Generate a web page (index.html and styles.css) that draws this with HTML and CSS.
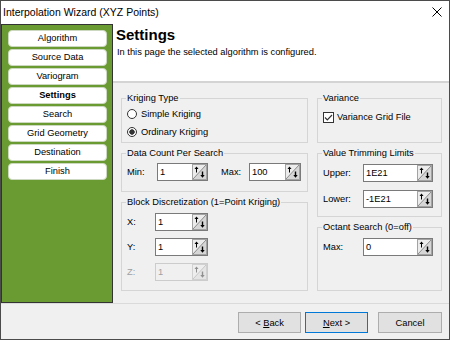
FILE: index.html
```html
<!DOCTYPE html>
<html lang="en">
<head>
    <meta charset="UTF-8">
    <title>Interpolation Wizard (XYZ Points)</title>
    <link rel="stylesheet" href="styles.css">
</head>
<body>
    <div class="window">
        <div class="titlebar">
            <span class="title">Interpolation Wizard (XYZ Points)</span>
            <svg class="close" width="10" height="10" viewBox="0 0 10 10"><path d="M0.5 0.5 L9.5 9.5 M9.5 0.5 L0.5 9.5" stroke="#000" stroke-width="1"/></svg>
        </div>
        <div class="main">
            <nav class="steps">
                <div class="step">Algorithm</div>
                <div class="step">Source Data</div>
                <div class="step">Variogram</div>
                <div class="step current">Settings</div>
                <div class="step">Search</div>
                <div class="step">Grid Geometry</div>
                <div class="step">Destination</div>
                <div class="step">Finish</div>
            </nav>
            <div class="page">
                <div class="page-head">
                    <h1>Settings</h1>
                    <p>In this page the selected algorithm is configured.</p>
                </div>
                <div class="page-body">
                    <div class="column left">
                        <fieldset class="group kriging">
                            <legend>Kriging Type</legend>
                            <label class="option"><span class="radio"></span>Simple Kriging</label>
                            <label class="option"><span class="radio checked"></span>Ordinary Kriging</label>
                        </fieldset>
                        <fieldset class="group data-count">
                            <legend>Data Count Per Search</legend>
                            <div class="field">
                                <label class="lbl-min">Min:</label>
                                <div class="spin w51"><span class="value">1</span><svg width="15" height="16" viewBox="0 0 15 16"><rect x=".5" y=".5" width="14" height="15" fill="#ececec" stroke="#a3a3a3"/><path d="M1 15 L14 1 L14 15 Z" fill="#d6d6d6"/><path d="M1 15 L14 1" stroke="#8c8c8c"/><path d="M4.5 4 V8.5" stroke="#000"/><path d="M2.5 5 L4.5 2.5 L6.5 5 Z" fill="#000"/><path d="M10.5 7.5 V12" stroke="#000" stroke-width="1.4"/><path d="M8.3 11 L10.5 13.8 L12.7 11 Z" fill="#000"/></svg></div>
                                <label class="lbl-max">Max:</label>
                                <div class="spin w52"><span class="value">100</span><svg width="15" height="16" viewBox="0 0 15 16"><rect x=".5" y=".5" width="14" height="15" fill="#ececec" stroke="#a3a3a3"/><path d="M1 15 L14 1 L14 15 Z" fill="#d6d6d6"/><path d="M1 15 L14 1" stroke="#8c8c8c"/><path d="M4.5 4 V8.5" stroke="#000"/><path d="M2.5 5 L4.5 2.5 L6.5 5 Z" fill="#000"/><path d="M10.5 7.5 V12" stroke="#000" stroke-width="1.4"/><path d="M8.3 11 L10.5 13.8 L12.7 11 Z" fill="#000"/></svg></div>
                            </div>
                        </fieldset>
                        <fieldset class="group block fill">
                            <legend>Block Discretization (1=Point Kriging)</legend>
                            <div class="field">
                                <label class="lbl-axis">X:</label>
                                <div class="spin w53"><span class="value">1</span><svg width="15" height="16" viewBox="0 0 15 16"><rect x=".5" y=".5" width="14" height="15" fill="#ececec" stroke="#a3a3a3"/><path d="M1 15 L14 1 L14 15 Z" fill="#d6d6d6"/><path d="M1 15 L14 1" stroke="#8c8c8c"/><path d="M4.5 4 V8.5" stroke="#000"/><path d="M2.5 5 L4.5 2.5 L6.5 5 Z" fill="#000"/><path d="M10.5 7.5 V12" stroke="#000" stroke-width="1.4"/><path d="M8.3 11 L10.5 13.8 L12.7 11 Z" fill="#000"/></svg></div>
                            </div>
                            <div class="field">
                                <label class="lbl-axis">Y:</label>
                                <div class="spin w53"><span class="value">1</span><svg width="15" height="16" viewBox="0 0 15 16"><rect x=".5" y=".5" width="14" height="15" fill="#ececec" stroke="#a3a3a3"/><path d="M1 15 L14 1 L14 15 Z" fill="#d6d6d6"/><path d="M1 15 L14 1" stroke="#8c8c8c"/><path d="M4.5 4 V8.5" stroke="#000"/><path d="M2.5 5 L4.5 2.5 L6.5 5 Z" fill="#000"/><path d="M10.5 7.5 V12" stroke="#000" stroke-width="1.4"/><path d="M8.3 11 L10.5 13.8 L12.7 11 Z" fill="#000"/></svg></div>
                            </div>
                            <div class="field disabled">
                                <label class="lbl-axis">Z:</label>
                                <div class="spin w53"><span class="value">1</span><svg width="15" height="16" viewBox="0 0 15 16"><rect x=".5" y=".5" width="14" height="15" fill="#ececec" stroke="#a3a3a3"/><path d="M1 15 L14 1 L14 15 Z" fill="#d6d6d6"/><path d="M1 15 L14 1" stroke="#8c8c8c"/><path d="M4.5 4 V8.5" stroke="#000"/><path d="M2.5 5 L4.5 2.5 L6.5 5 Z" fill="#000"/><path d="M10.5 7.5 V12" stroke="#000" stroke-width="1.4"/><path d="M8.3 11 L10.5 13.8 L12.7 11 Z" fill="#000"/></svg></div>
                            </div>
                        </fieldset>
                    </div>
                    <div class="column right">
                        <fieldset class="group variance">
                            <legend>Variance</legend>
                            <label class="check"><svg width="11" height="11" viewBox="0 0 11 11"><rect x=".5" y=".5" width="10" height="10" fill="#fff" stroke="#333"/><path d="M2 5.5 L4.3 7.8 L9 3" fill="none" stroke="#333" stroke-width="1.2"/></svg>Variance Grid File</label>
                        </fieldset>
                        <fieldset class="group trimming">
                            <legend>Value Trimming Limits</legend>
                            <div class="field">
                                <label class="lbl-limit">Upper:</label>
                                <div class="spin w70"><span class="value">1E21</span><svg width="15" height="16" viewBox="0 0 15 16"><rect x=".5" y=".5" width="14" height="15" fill="#ececec" stroke="#a3a3a3"/><path d="M1 15 L14 1 L14 15 Z" fill="#d6d6d6"/><path d="M1 15 L14 1" stroke="#8c8c8c"/><path d="M4.5 4 V8.5" stroke="#000"/><path d="M2.5 5 L4.5 2.5 L6.5 5 Z" fill="#000"/><path d="M10.5 7.5 V12" stroke="#000" stroke-width="1.4"/><path d="M8.3 11 L10.5 13.8 L12.7 11 Z" fill="#000"/></svg></div>
                            </div>
                            <div class="field">
                                <label class="lbl-limit">Lower:</label>
                                <div class="spin w70"><span class="value">-1E21</span><svg width="15" height="16" viewBox="0 0 15 16"><rect x=".5" y=".5" width="14" height="15" fill="#ececec" stroke="#a3a3a3"/><path d="M1 15 L14 1 L14 15 Z" fill="#d6d6d6"/><path d="M1 15 L14 1" stroke="#8c8c8c"/><path d="M4.5 4 V8.5" stroke="#000"/><path d="M2.5 5 L4.5 2.5 L6.5 5 Z" fill="#000"/><path d="M10.5 7.5 V12" stroke="#000" stroke-width="1.4"/><path d="M8.3 11 L10.5 13.8 L12.7 11 Z" fill="#000"/></svg></div>
                            </div>
                        </fieldset>
                        <fieldset class="group octant fill">
                            <legend>Octant Search (0=off)</legend>
                            <div class="field">
                                <label class="lbl-limit">Max:</label>
                                <div class="spin w70"><span class="value">0</span><svg width="15" height="16" viewBox="0 0 15 16"><rect x=".5" y=".5" width="14" height="15" fill="#ececec" stroke="#a3a3a3"/><path d="M1 15 L14 1 L14 15 Z" fill="#d6d6d6"/><path d="M1 15 L14 1" stroke="#8c8c8c"/><path d="M4.5 4 V8.5" stroke="#000"/><path d="M2.5 5 L4.5 2.5 L6.5 5 Z" fill="#000"/><path d="M10.5 7.5 V12" stroke="#000" stroke-width="1.4"/><path d="M8.3 11 L10.5 13.8 L12.7 11 Z" fill="#000"/></svg></div>
                            </div>
                        </fieldset>
                    </div>
                </div>
            </div>
        </div>
        <div class="footer">
            <button class="btn">&lt; <u>B</u>ack</button>
            <button class="btn default"><u>N</u>ext &gt;</button>
            <button class="btn cancel">Cancel</button>
        </div>
    </div>
</body>
</html>
```

FILE: styles.css
```css
* {
    box-sizing: border-box;
}
body {
    margin: 0;
    font-family: "Liberation Sans", Arial, sans-serif;
    font-size: 9.3px;
    color: #000;
}
.window {
    width: 450px;
    height: 340px;
    border: 1px solid #4b4b4b;
    display: flex;
    flex-direction: column;
    background-color: #f0f0f0;
}
.titlebar {
    flex: none;
    height: 23px;
    background-color: #fff;
    display: flex;
    align-items: center;
    justify-content: space-between;
    padding: 0 7px 1px 2px;
}
.title {
    font-size: 10.5px;
}
.close {
    display: block;
}

.main {
    flex: none;
    height: 279px;
    display: flex;
}
.steps {
    flex: none;
    width: 112px;
    background-color: #6a9a32;
    border: 1px solid #333;
    padding: 5px 5px 0 6px;
    display: flex;
    flex-direction: column;
    gap: 2px;
}
.step {
    height: 17px;
    line-height: 15px;
    background-color: #fff;
    border: 1px solid #cdd8c0;
    border-radius: 4px;
    text-align: center;
}
.step.current {
    font-weight: bold;
}

.page {
    flex: 1;
    min-width: 0;
    display: flex;
    flex-direction: column;
}
.page-head {
    flex: none;
    height: 59px;
    background-color: #fff;
    border-bottom: 2px solid #d4d4d4;
    padding: 2px 0 0 3px;
}
.page-head h1 {
    margin: 0;
    font-size: 15px;
    line-height: 17px;
    font-weight: bold;
}
.page-head p {
    margin: 3px 0 0 1px;
    line-height: 12px;
}
.page-body {
    flex: 1;
    display: flex;
    gap: 9px;
    padding: 9px 7px 12px 8px;
}
.column {
    display: flex;
    flex-direction: column;
    gap: 4px;
}
.column.left {
    width: 187px;
}
.column.right {
    width: 125px;
}

/* group boxes */
.group {
    margin: 0;
    min-width: 0;
    border: 1px solid #d5d5d5;
    padding: 0 5px;
}
.group legend {
    padding: 0 1px;
    margin-left: -1px;
    line-height: 12px;
}
.kriging {
    height: 51px;
    padding-top: 1px;
}
.data-count {
    height: 45px;
    padding-top: 4px;
}
.variance {
    height: 51px;
    padding-top: 4px;
}
.trimming {
    height: 70px;
    padding-top: 5px;
}
.block,
.octant {
    padding-top: 5px;
}
.fill {
    flex: 1;
}

.option,
.check {
    display: flex;
    align-items: center;
    height: 18px;
}
.radio {
    width: 10px;
    height: 10px;
    border: 1px solid #333;
    border-radius: 50%;
    background-color: #fff;
    margin-right: 4px;
}
.radio.checked {
    background: radial-gradient(circle, #333 0 2.4px, #fff 3px);
}
.check svg {
    margin-right: 3px;
}

.field {
    display: flex;
    align-items: center;
    height: 18px;
}
.block .field + .field {
    margin-top: 7px;
}
.trimming .field + .field {
    margin-top: 8px;
}
.lbl-min {
    width: 30px;
}
.lbl-max {
    width: 28px;
    margin-left: 13px;
}
.lbl-axis {
    width: 28px;
}
.lbl-limit {
    width: 40px;
}
.spin {
    display: flex;
    align-items: center;
    height: 18px;
    border: 1px solid #7a7a7a;
    background-color: #fff;
    padding-left: 2px;
}
.spin .value {
    flex: 1;
}
.spin svg {
    flex: none;
    display: block;
}
.w51 { width: 51px; }
.w52 { width: 52px; }
.w53 { width: 53px; }
.w70 { width: 70px; }

.field.disabled {
    color: #a0a0a0;
}
.field.disabled .spin {
    border-color: #cccccc;
    background-color: #f0f0f0;
}
.field.disabled svg {
    opacity: 0.4;
}

.footer {
    flex: 1;
    display: flex;
    justify-content: flex-end;
    align-items: flex-start;
    border-top: 1px solid #dadada;
    padding: 8px 7px 0 0;
}
.btn {
    width: 63px;
    height: 21px;
    margin-left: 4px;
    padding: 0;
    font: inherit;
    color: #000;
    background-color: #e1e1e1;
    border: 1px solid #adadad;
}
.btn.default {
    border-color: #0078d7;
}
.btn.cancel {
    width: 64px;
    margin-left: 10px;
}
```
